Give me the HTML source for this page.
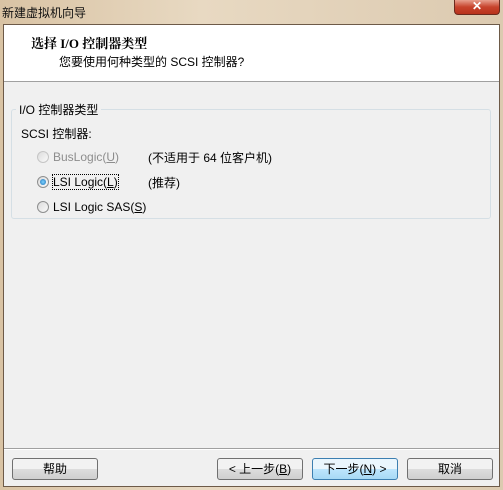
<!DOCTYPE html>
<html><head><meta charset="utf-8"><style>
*{margin:0;padding:0;box-sizing:border-box}
body{width:503px;height:490px;overflow:hidden;background:linear-gradient(90deg,#d9c3a4,#e8d9c2 40%,#dccab0);font-family:"Liberation Sans","Noto Sans CJK SC",sans-serif;font-size:12px;color:#000;position:relative}
.t{position:absolute;left:2px;top:4px;font-size:12px;color:#111}
.x{position:absolute;left:454px;top:0;width:46px;height:15px;background:linear-gradient(#e8a08e,#c7432c 50%,#b8321c);border:1px solid #6b2a1e;border-top:none;border-radius:0 0 4px 4px;color:#fff;font-weight:bold;text-align:center;font-size:12px;line-height:13px}
.c{position:absolute;left:3px;top:24px;width:497px;height:463px;background:#f0f0f0;border:1px solid #6d5a48}
.h{position:absolute;left:0;top:0;width:100%;height:57px;background:#fff;border-bottom:1px solid #a0a0a0}
.h1{position:absolute;left:27px;top:8px;font-weight:bold;font-family:"Liberation Serif","Noto Serif CJK SC",serif;font-size:13px}
.h2{position:absolute;left:55px;top:28px}
.g{position:absolute;left:7px;top:84px;width:480px;height:110px;border:1px solid #d5dfe5;border-radius:3px}
.gl{position:absolute;left:4px;top:-9px;background:#f0f0f0;padding:0 3px}
.r{position:absolute;left:33px;display:flex;align-items:center}
.rb{width:12px;height:12px;border-radius:50%;border:1px solid #8e8f8f;background:linear-gradient(135deg,#dcdcdc,#fafafa);margin-right:4px;position:relative}
.rb.on:after{content:"";position:absolute;left:2px;top:2px;width:6px;height:6px;border-radius:50%;background:radial-gradient(#7fd3ff,#1a6fb5)}
.sep{position:absolute;left:0;top:423px;width:100%;border-top:1px solid #a0a0a0;border-bottom:1px solid #fff}
.b{position:absolute;top:433px;width:86px;height:22px;border:1px solid #707070;border-radius:3px;background:linear-gradient(#f2f2f2 50%,#dddddd 50%,#cfcfcf);text-align:center;line-height:20px}
.b.d{border-color:#3c7fb1;background:linear-gradient(#eaf6fd 50%,#bee6fd 50%,#a7d9f5)}
u{text-decoration:underline}
</style></head><body>
<div class="t">新建虚拟机向导</div>
<div class="x">✕</div>
<div class="c">
<div class="h"><div class="h1">选择 I/O 控制器类型</div><div class="h2">您要使用何种类型的 SCSI 控制器?</div></div>
<div class="g"><div class="gl">I/O 控制器类型</div></div>
<div style="position:absolute;left:17px;top:100px">SCSI 控制器:</div>
<div class="r" style="top:125px;color:#8d8d8d"><span class="rb" style="border-color:#c5c5c5"></span>BusLogic(<u>U</u>)</div>
<div style="position:absolute;left:144px;top:124px">(不适用于 64 位客户机)</div>
<div class="r" style="top:150px"><span class="rb on"></span><span style="outline:1px dotted #000">LSI Logic(<u>L</u>)</span></div>
<div style="position:absolute;left:144px;top:149px">(推荐)</div>
<div class="r" style="top:175px"><span class="rb"></span>LSI Logic SAS(<u>S</u>)</div>
<div class="sep"></div>
<div class="b" style="left:8px">帮助</div>
<div class="b" style="left:213px">&lt; 上一步(<u>B</u>)</div>
<div class="b d" style="left:308px">下一步(<u>N</u>) &gt;</div>
<div class="b" style="left:403px">取消</div>
</div>
</body></html>
